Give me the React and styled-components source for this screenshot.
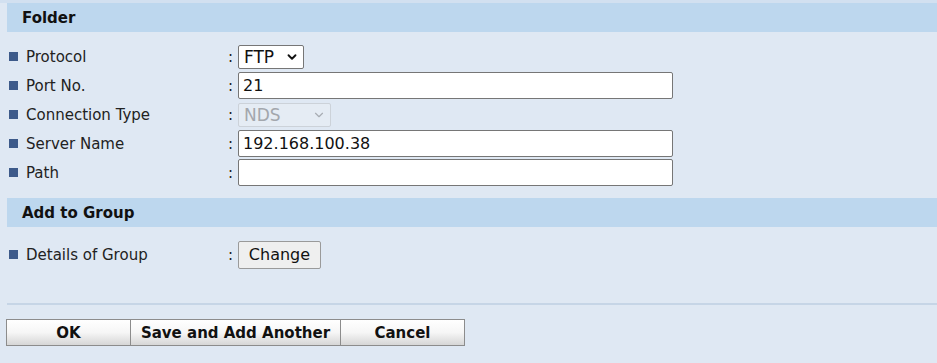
import styled, { createGlobalStyle } from "styled-components"
import { ChevronDown } from "lucide-react"

const GlobalStyle = createGlobalStyle`
    html, body {
        margin: 0;
        padding: 0;
        background-color: #dfe8f3;
        font-family: "DejaVu Sans", Verdana, sans-serif;
    }
`

const folderRows = [
    { label: "Protocol", kind: "select", value: "FTP", width: 66 },
    { label: "Port No.", kind: "text", value: "21" },
    { label: "Connection Type", kind: "select", value: "NDS", width: 93, disabled: true },
    { label: "Server Name", kind: "text", value: "192.168.100.38" },
    { label: "Path", kind: "text", value: "" },
]

function Field({ row }) {
    if (row.kind === "select") {
        return (
            <StyledSelectBox $width={row.width}>
                <StyledSelect $disabled={row.disabled} disabled={row.disabled} defaultValue={row.value}>
                    <option>{row.value}</option>
                </StyledSelect>
                <StyledChevron $disabled={row.disabled}>
                    <ChevronDown size={14} strokeWidth={row.disabled ? 2 : 3.2} />
                </StyledChevron>
            </StyledSelectBox>
        )
    }
    return <StyledInput type="text" defaultValue={row.value} />
}

export default function App() {
    return (
        <StyledPage>
            <GlobalStyle />
            <StyledSectionHeader>Folder</StyledSectionHeader>
            <StyledRows $top={10} $bottom={11}>
                {folderRows.map((row) => (
                    <StyledRow key={row.label}>
                        <StyledLabel>
                            <StyledBullet />
                            {row.label}
                        </StyledLabel>
                        <StyledColon>:</StyledColon>
                        <Field row={row} />
                    </StyledRow>
                ))}
            </StyledRows>
            <StyledSectionHeader>Add to Group</StyledSectionHeader>
            <StyledRows $top={13} $bottom={11}>
                <StyledRow>
                    <StyledLabel>
                        <StyledBullet />
                        Details of Group
                    </StyledLabel>
                    <StyledColon>:</StyledColon>
                    <StyledChangeButton>Change</StyledChangeButton>
                </StyledRow>
            </StyledRows>
            <StyledDivider />
            <StyledFooter>
                <StyledActionButton $width={125}>OK</StyledActionButton>
                <StyledActionButton $width={211}>Save and Add Another</StyledActionButton>
                <StyledActionButton $width={125}>Cancel</StyledActionButton>
            </StyledFooter>
        </StyledPage>
    )
}

const StyledPage = styled.div`
    display: flex;
    flex-direction: column;
    border-top: 3px solid #d2e0f0;
    min-height: 360px;
    color: #1a1a1a;
`

const StyledSectionHeader = styled.div`
    margin-left: 7px;
    height: 29px;
    display: flex;
    align-items: center;
    padding-left: 15px;
    background-color: #bdd7ee;
    font-size: 15px;
    font-weight: bold;
    color: #111;
`

const StyledRows = styled.div`
    display: flex;
    flex-direction: column;
    padding: ${(p) => p.$top}px 0 ${(p) => p.$bottom}px 0;
`

const StyledRow = styled.div`
    display: flex;
    align-items: center;
    height: 29px;
`

const StyledLabel = styled.div`
    display: flex;
    align-items: center;
    gap: 8px;
    width: 228px;
    padding-left: 9px;
    box-sizing: border-box;
    font-size: 15px;
    color: #222;
`

const StyledBullet = styled.span`
    width: 9px;
    height: 9px;
    background-color: #3d5a8a;
    flex-shrink: 0;
`

const StyledColon = styled.span`
    width: 10px;
    font-size: 15px;
    color: #222;
`

const StyledInput = styled.input`
    width: 435px;
    height: 27px;
    box-sizing: border-box;
    border: 1px solid #767676;
    border-radius: 2px;
    padding: 0 4px;
    font-family: "DejaVu Sans", Verdana, sans-serif;
    font-size: 16px;
    color: #111;
    background-color: #fff;
`

const StyledSelectBox = styled.div`
    position: relative;
    display: flex;
    width: ${(p) => p.$width}px;
    height: 24px;
`

const StyledSelect = styled.select`
    appearance: none;
    width: 100%;
    height: 100%;
    box-sizing: border-box;
    border: 1px solid ${(p) => (p.$disabled ? "#ccd2d9" : "#767676")};
    border-radius: 2px;
    padding: 0 0 0 5px;
    font-family: "DejaVu Sans", Verdana, sans-serif;
    font-size: 17px;
    color: ${(p) => (p.$disabled ? "#a3a7ad" : "#111")};
    background-color: ${(p) => (p.$disabled ? "#e5ecf4" : "#fff")};
    opacity: 1;
`

const StyledChevron = styled.span`
    position: absolute;
    right: 5px;
    top: 50%;
    transform: translateY(-50%);
    display: flex;
    color: ${(p) => (p.$disabled ? "#a8adb3" : "#111")};
    pointer-events: none;
`

const StyledChangeButton = styled.button`
    width: 83px;
    height: 28px;
    box-sizing: border-box;
    border: 1px solid #9a9a9a;
    border-radius: 2px;
    background-color: #efefef;
    font-family: "DejaVu Sans", Verdana, sans-serif;
    font-size: 16px;
    color: #111;
    padding: 0;
`

const StyledDivider = styled.div`
    margin: 23px 0 0 7px;
    height: 2px;
    background-color: #c6d5e6;
`

const StyledFooter = styled.div`
    display: flex;
    padding: 14px 0 0 6px;
`

const StyledActionButton = styled.button`
    width: ${(p) => p.$width}px;
    height: 27px;
    margin-right: -1px;
    box-sizing: border-box;
    border: 1px solid #8c8c8c;
    background: linear-gradient(to bottom, #ffffff 0%, #f6f6f6 50%, #d6d6d6 100%);
    font-family: "DejaVu Sans", Verdana, sans-serif;
    font-size: 15px;
    font-weight: bold;
    color: #111;
    padding: 0;
`
